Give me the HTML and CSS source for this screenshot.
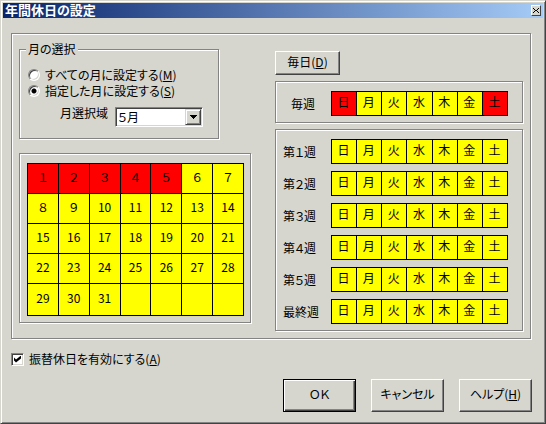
FILE: index.html
```
<!DOCTYPE html>
<html lang="ja">
<head>
    <meta charset="UTF-8">
    <meta name="viewport" content="width=device-width, initial-scale=1.0">
    <title>年間休日の設定</title>
    <link rel="stylesheet" href="styles.css">
</head>
<body>
    <div class="dialog">
        <!-- Title bar -->
        <header class="titlebar">
            <h1>年間休日の設定</h1>
            <button type="button" class="close" aria-label="閉じる">
                <svg width="6" height="5" viewBox="0 0 6 5" shape-rendering="crispEdges"><path d="M0 0h1v1h-1zM5 0h1v1h-1zM1 1h1v1h-1zM4 1h1v1h-1zM2 2h2v1h-2zM1 3h1v1h-1zM4 3h1v1h-1zM0 4h1v1h-1zM5 4h1v1h-1z"/></svg>
            </button>
        </header>

        <form>
            <div class="panel main">
                <!-- Month selection and calendar -->
                <div class="left">
                    <fieldset>
                        <legend>月の選択</legend>
                        <label class="option"><input type="radio" name="range">すべての月に設定する(<u>M</u>)</label>
                        <label class="option"><input type="radio" name="range" checked>指定した月に設定する(<u>S</u>)</label>
                        <div class="month">
                            <label for="month">月選択域</label>
                            <div class="combo">
                                <select id="month">
                                    <option>１月</option>
                                    <option>２月</option>
                                    <option>３月</option>
                                    <option>４月</option>
                                    <option selected>５月</option>
                                    <option>６月</option>
                                    <option>７月</option>
                                    <option>８月</option>
                                    <option>９月</option>
                                    <option>10月</option>
                                    <option>11月</option>
                                    <option>12月</option>
                                </select>
                                <span class="arrow"><svg width="7" height="4" viewBox="0 0 7 4" shape-rendering="crispEdges"><path d="M0 0h7v1h-7zM1 1h5v1h-5zM2 2h3v1h-3zM3 3h1v1h-1z"/></svg></span>
                            </div>
                        </div>
                    </fieldset>

                    <div class="panel calendar">
                        <table>
                            <tr><td class="off">１</td><td class="off">２</td><td class="off">３</td><td class="off">４</td><td class="off">５</td><td>６</td><td>７</td></tr>
                            <tr><td>８</td><td>９</td><td>10</td><td>11</td><td>12</td><td>13</td><td>14</td></tr>
                            <tr><td>15</td><td>16</td><td>17</td><td>18</td><td>19</td><td>20</td><td>21</td></tr>
                            <tr><td>22</td><td>23</td><td>24</td><td>25</td><td>26</td><td>27</td><td>28</td></tr>
                            <tr class="last"><td>29</td><td>30</td><td>31</td><td></td><td></td><td></td><td></td></tr>
                        </table>
                    </div>
                </div>

                <!-- Weekday selection -->
                <div class="right">
                    <button type="button" class="btn everyday">毎日(<u>D</u>)</button>

                    <div class="panel weeks">
                        <div class="week">
                            <span class="name indent">毎週</span>
                            <div class="days"><button type="button" class="off">日</button><button type="button">月</button><button type="button">火</button><button type="button">水</button><button type="button">木</button><button type="button">金</button><button type="button" class="off">土</button></div>
                        </div>
                    </div>

                    <div class="panel weeks">
                        <div class="week">
                            <span class="name">第１週</span>
                            <div class="days"><button type="button">日</button><button type="button">月</button><button type="button">火</button><button type="button">水</button><button type="button">木</button><button type="button">金</button><button type="button">土</button></div>
                        </div>
                        <div class="week">
                            <span class="name">第２週</span>
                            <div class="days"><button type="button">日</button><button type="button">月</button><button type="button">火</button><button type="button">水</button><button type="button">木</button><button type="button">金</button><button type="button">土</button></div>
                        </div>
                        <div class="week">
                            <span class="name">第３週</span>
                            <div class="days"><button type="button">日</button><button type="button">月</button><button type="button">火</button><button type="button">水</button><button type="button">木</button><button type="button">金</button><button type="button">土</button></div>
                        </div>
                        <div class="week">
                            <span class="name">第４週</span>
                            <div class="days"><button type="button">日</button><button type="button">月</button><button type="button">火</button><button type="button">水</button><button type="button">木</button><button type="button">金</button><button type="button">土</button></div>
                        </div>
                        <div class="week">
                            <span class="name">第５週</span>
                            <div class="days"><button type="button">日</button><button type="button">月</button><button type="button">火</button><button type="button">水</button><button type="button">木</button><button type="button">金</button><button type="button">土</button></div>
                        </div>
                        <div class="week">
                            <span class="name">最終週</span>
                            <div class="days"><button type="button">日</button><button type="button">月</button><button type="button">火</button><button type="button">水</button><button type="button">木</button><button type="button">金</button><button type="button">土</button></div>
                        </div>
                    </div>
                </div>
            </div>

            <label class="substitute"><input type="checkbox" checked>振替休日を有効にする(<u>A</u>)</label>

            <!-- Dialog buttons -->
            <div class="actions">
                <button type="button" class="btn default">ＯＫ</button>
                <button type="button" class="btn">キャンセル</button>
                <button type="button" class="btn">ヘルプ(<u>H</u>)</button>
            </div>
        </form>
    </div>
</body>
</html>
```

FILE: styles.css
```
* {
    box-sizing: border-box;
}
body {
    margin: 0;
    background: #d6d6ce;
    color: #000;
}
body, button, select {
    font: 12px/16px "Noto Sans CJK JP", sans-serif;
    font-feature-settings: "palt";
}
.dialog {
    min-height: 100vh;
    padding: 2px;
    border: 1px solid;
    border-color: #d6d6ce #424242 #424242 #d6d6ce;
    box-shadow: inset 1px 1px 0 #fff, inset -1px -1px 0 #848484;
}

/* Title bar */
.titlebar {
    display: flex;
    align-items: center;
    justify-content: space-between;
    height: 15px;
    padding: 0 2px;
    background: linear-gradient(to right, #08246b, #a5cbf7);
}
.titlebar h1 {
    margin: 0;
    color: #fff;
    font-size: 13px;
    line-height: 13px;
    padding-bottom: 2px;
}
.close {
    display: flex;
    align-items: center;
    justify-content: center;
    width: 10px;
    height: 11px;
    padding: 0 0 1px;
    background: #d6d6ce;
    border: 1px solid;
    border-color: #fff #424242 #424242 #fff;
}

form {
    padding: 15px 11px 9px 8px;
}

/* Etched frames */
.panel, fieldset {
    border: 1px solid #848484;
    box-shadow: 1px 1px 0 #fff, inset 1px 1px 0 #fff;
}
.main {
    display: grid;
    grid-template-columns: 232fr 248fr;
    column-gap: 24px;
    margin-right: 1px;
    padding: 7px;
}

/* Month selection */
fieldset {
    min-width: 0;
    margin: 0 32px 14px 0;
    padding: 10px 15px 11px 6px;
}
legend {
    padding: 0 2px;
    background: #d6d6ce;
}
.option, .substitute {
    display: flex;
    align-items: center;
    white-space: nowrap;
}
.option {
    padding-left: 2px;
}
input {
    flex: none;
    appearance: none;
    margin: 0;
    background: #fff;
}
input[type="radio"] {
    width: 12px;
    height: 12px;
    margin-right: 5px;
    border: 1px solid;
    border-color: #848484 #fff #fff #848484;
    border-radius: 50%;
    box-shadow: inset 1px 1px 0 #424242, inset -1px -1px 0 #d6d6ce;
}
input[type="radio"]:checked {
    background: radial-gradient(circle, #000 2px, #fff 3px);
}
.month {
    display: flex;
    justify-content: space-between;
    margin: 8px 0 0 34px;
    white-space: nowrap;
}
.month label {
    line-height: 12px;
}
.combo {
    position: relative;
    width: 88px;
}
.combo select {
    appearance: none;
    display: block;
    width: 100%;
    height: 20px;
    padding: 0 2px;
    background: #fff;
    color: #000;
    border: 1px solid;
    border-color: #848484 #fff #fff #848484;
    border-radius: 0;
    box-shadow: inset 1px 1px 0 #424242, inset -1px -1px 0 #d6d6ce;
}
.arrow {
    position: absolute;
    top: 2px;
    right: 2px;
    bottom: 2px;
    display: flex;
    align-items: center;
    justify-content: center;
    width: 16px;
    background: #d6d6ce;
    border: 1px solid;
    border-color: #d6d6ce #424242 #424242 #d6d6ce;
    box-shadow: inset 1px 1px 0 #fff, inset -1px -1px 0 #848484;
    pointer-events: none;
}

/* Calendar */
.calendar {
    padding: 9px 6px 6px 7px;
}
.calendar table {
    width: 100%;
    table-layout: fixed;
    border-spacing: 1px;
    background: #000;
}
.calendar td {
    height: 29px;
    padding: 0 0 3px;
    background: #ff0;
    text-align: center;
}
.calendar .last td {
    height: 31px;
}
.calendar .off, .days .off {
    background: #f00;
}

/* Weekdays */
.right {
    display: flex;
    flex-direction: column;
    gap: 6px;
    padding-top: 10px;
}
.weeks {
    display: grid;
    gap: 7px;
    padding: 9px 14px 6px 7px;
}
.week {
    display: flex;
    height: 25px;
}
.name {
    flex: none;
    width: 48px;
    line-height: 26px;
}
.indent {
    padding-left: 8px;
}
.days {
    flex: 1;
    display: grid;
    grid-template-columns: repeat(7, 1fr);
    gap: 1px;
    padding: 1px;
    background: #000;
}
.days button {
    padding: 0 1px 3px 0;
    background: #ff0;
    color: #000;
    border: 0;
}

/* Push buttons */
.btn {
    width: 73px;
    height: 33px;
    padding: 0 0 3px;
    background: #d6d6ce;
    color: #000;
    border: 1px solid;
    border-color: #fff #424242 #424242 #fff;
    box-shadow: inset -1px -1px 0 #848484;
}
.everyday {
    width: 65px;
    height: 24px;
}
.default {
    border-color: #000;
    box-shadow: inset 1px 1px 0 #fff, inset -1px -1px 0 #424242, inset -2px -2px 0 #848484;
}

.substitute {
    margin-top: 12px;
}
.substitute input {
    width: 13px;
    height: 13px;
    margin-right: 5px;
    border: 1px solid;
    border-color: #848484 #fff #fff #848484;
    box-shadow: inset 1px 1px 0 #424242, inset -1px -1px 0 #d6d6ce;
}
.substitute input:checked::before {
    content: "";
    display: block;
    width: 7px;
    height: 7px;
    margin: 2px;
    background: #000;
    clip-path: polygon(0 2px, 2px 4px, 7px 0, 7px 3px, 2px 7px, 0 5px);
}
.actions {
    display: flex;
    justify-content: flex-end;
    gap: 15px;
    margin-top: 12px;
}
```
